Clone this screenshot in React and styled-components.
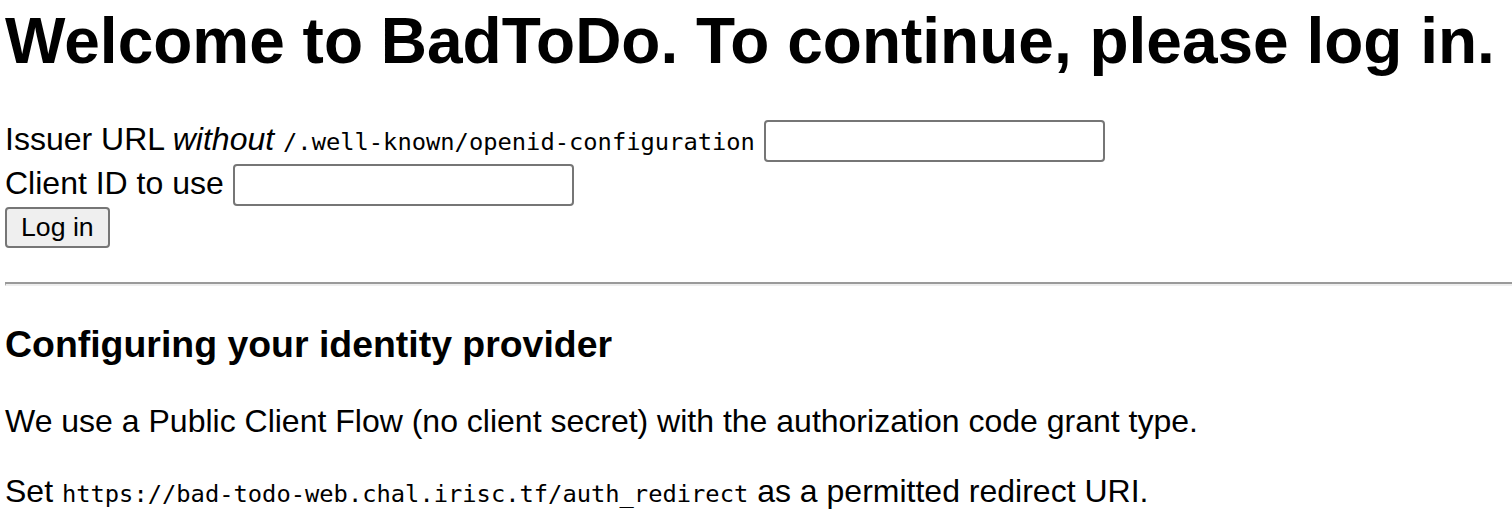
import React from "react";
import styled, { createGlobalStyle } from "styled-components";

const Global = createGlobalStyle`
  html, body {
    margin: 0;
    padding: 0;
    background: #ffffff;
  }
  body {
    font-family: "Liberation Sans", Arial, sans-serif;
    font-size: 32px;
    color: #000000;
  }
`;

const Page = styled.main`
  padding: 4px 0 0 5px;
`;

const Title = styled.h1`
  margin: 0 0 42px;
  font-size: 64px;
  font-weight: 700;
  line-height: normal;
`;

const LoginForm = styled.form`
  display: flex;
  flex-direction: column;
  gap: 1.5px;
  margin: 0;
`;

const Row = styled.div`
  display: block;
  line-height: normal;
  white-space: nowrap;
`;

const Code = styled.code`
  font-family: "DejaVu Sans Mono", "Liberation Mono", monospace;
  font-size: 23.75px;
  letter-spacing: 0;
`;

const TextInput = styled.input`
  box-sizing: border-box;
  width: 341px;
  height: 42px;
  padding: 0 4px;
  margin: 0;
  border: 2px solid #767676;
  border-radius: 4px;
  background: #ffffff;
  font-family: "Liberation Sans", Arial, sans-serif;
  font-size: 26.67px;
  vertical-align: baseline;
  outline: none;
`;

const Button = styled.button`
  box-sizing: border-box;
  height: 41px;
  padding: 0 14px;
  margin: 0;
  border: 2px solid #767676;
  border-radius: 4px;
  background: #efefef;
  color: #000000;
  font-family: "Liberation Sans", Arial, sans-serif;
  font-size: 26.67px;
  line-height: normal;
`;

const Rule = styled.hr`
  margin: 34px 0 0;
  height: 0;
  border: 0;
  border-top: 2px solid #9a9a9a;
  border-bottom: 2px solid #eeeeee;
  border-left: 1px solid #9a9a9a;
`;

const Subtitle = styled.h3`
  margin: 36.5px 0 0;
  font-size: 37.44px;
  font-weight: 700;
  line-height: normal;
`;

const Para = styled.p`
  margin: ${(p) => p.$top}px 0 0;
  line-height: normal;
`;

export default function App() {
  return (
    <>
      <Global />
      <Page>
        <Title>Welcome to BadToDo. To continue, please log in.</Title>
        <LoginForm onSubmit={(e) => e.preventDefault()}>
          <Row>
            Issuer URL <em>without</em> <Code>/.well-known/openid-configuration</Code>{" "}
            <TextInput type="text" />
          </Row>
          <Row>
            Client ID to use <TextInput type="text" />
          </Row>
          <Row>
            <Button type="submit">Log in</Button>
          </Row>
        </LoginForm>
        <Rule />
        <Subtitle>Configuring your identity provider</Subtitle>
        <Para $top={37.5}>
          We use a Public Client Flow (no client secret) with the authorization code grant type.
        </Para>
        <Para $top={33}>
          Set <Code>https://bad-todo-web.chal.irisc.tf/auth_redirect</Code> as a permitted redirect URI.
        </Para>
      </Page>
    </>
  );
}
